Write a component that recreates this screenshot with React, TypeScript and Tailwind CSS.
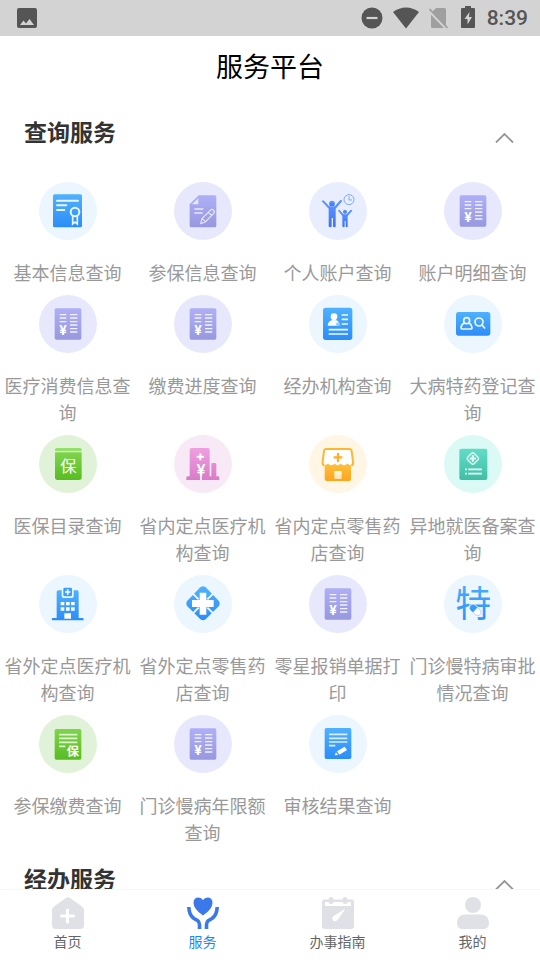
import { useState, type ReactNode } from "react";

type Service = { label: string; tint: string; art: ReactNode };

const Gradient = ({ id, from, to }: { id: string; from: string; to: string }) => (
  <linearGradient id={id} x1="0" y1="0" x2="0" y2="1">
    <stop offset="0" stopColor={from} />
    <stop offset="1" stopColor={to} />
  </linearGradient>
);

const Gradients = () => (
  <svg className="block size-0" aria-hidden="true">
    <defs>
      <Gradient id="blue" from="#4fb1fe" to="#2c8df7" />
      <Gradient id="indigo" from="#6297ff" to="#3b74f6" />
      <Gradient id="violet" from="#aeaff6" to="#9798de" />
      <Gradient id="green" from="#7fd44b" to="#58bd20" />
      <Gradient id="pink" from="#ef9fe0" to="#d87cc8" />
      <Gradient id="orange" from="#ffc03c" to="#fda41d" />
      <Gradient id="teal" from="#62dcc6" to="#40bea6" />
      <Gradient id="cream" from="#fffaf0" to="#ffe0a8" />
    </defs>
  </svg>
);

const Certificate = (
  <>
    <rect x="42" y="37" width="87" height="99" rx="5" fill="url(#blue)" />
    <g fill="none" stroke="#e9f5ff" strokeWidth="6" strokeLinecap="round">
      <path d="M54 56H117M54 70H82M54 84H76" />
      <circle cx="108" cy="90" r="13" />
      <path d="M101 104v22l7-6 7 6v-22" strokeWidth="5" />
    </g>
  </>
);

const EditDoc = (
  <>
    <path d="M74 40H122a5 5 0 0 1 5 5V131a5 5 0 0 1-5 5H52a5 5 0 0 1-5-5V67Z" fill="url(#violet)" />
    <path d="M54 67 73 49V67Z" fill="#e8e8fd" />
    <g fill="none" stroke="#e8e8fd" strokeWidth="4" strokeLinejoin="round">
      <path d="M61 81H88M61 93H86" />
      <path d="M80 125 84 110 109 85a6 6 0 0 1 10 9L95 119ZM84 110l11 9M103 91l10 9" strokeWidth="3.5" />
    </g>
  </>
);

const Family = (
  <>
    <g fill="url(#indigo)">
      <circle cx="69" cy="65" r="8.5" />
      <path d="M38 58q3-5 7-2L60 72q9 5 18 0L93 55q5-2 7 2L80 80V133q0 3-4 3t-4-3V108h-4v25q0 3-4 3t-5-3V80Z" />
      <circle cx="108" cy="89" r="6" />
      <path d="M87 86q1-4 5-2l10 11q6 3 12 0l10-11q4-2 6 2L116 102V133q0 3-3 3t-3-3V117h-3v16q0 3-3 3t-4-3V102Z" />
    </g>
    <g fill="none" stroke="#7ea8fb" strokeWidth="3">
      <circle cx="120" cy="53" r="15" />
      <path d="M120 43V54H129" />
    </g>
  </>
);

const Bill = (
  <>
    <rect x="47" y="40" width="80" height="94" rx="5" fill="url(#violet)" />
    <path
      d="M62 59H82M62 69H82M62 80H82M93 59H115M93 69H115M93 80H115M93 90H115M93 101H115M93 111H115"
      stroke="#f1f1ff"
      strokeWidth="4"
    />
    <text x="72" y="121" textAnchor="middle" fontSize="40" className="font-['Inter',sans-serif] font-bold" fill="#fff">
      ¥
    </text>
  </>
);

const Agency = (
  <>
    <rect x="42" y="38" width="88" height="97" rx="8" fill="url(#blue)" />
    <circle cx="75" cy="65" r="10" fill="#fff" />
    <path d="M56 92q1-17 19-17t16 17Z" fill="#fff" />
    <circle cx="87" cy="88" r="6" fill="#8ecbfb" />
    <path d="M98 60H117M98 73H117M98 87H117M59 104H117M59 117H117" stroke="#f1f9ff" strokeWidth="5" />
  </>
);

const PersonSearch = (
  <>
    <rect x="36" y="51" width="103" height="71" rx="8" fill="url(#blue)" />
    <g fill="none" stroke="#eef8ff" strokeWidth="5" strokeLinecap="round">
      <circle cx="68" cy="77" r="9" />
      <path d="M61 84q-9 4-10 14 0 4 5 4H79q6 0 5-5-1-9-9-13" />
      <circle cx="105" cy="81" r="12" />
      <path d="M114 90l8 9" />
    </g>
  </>
);

const Catalogue = (
  <>
    <path d="M48 48V45q0-6 6-6H122q6 0 6 6V48Z" fill="#90e069" />
    <path d="M48 52H128V127q0 8-8 8H56q-8 0-8-8Z" fill="url(#green)" />
    <text x="88" y="112" textAnchor="middle" fontSize="49" className="font-['Noto_Sans_CJK_SC',sans-serif] font-normal" fill="#fff">
      保
    </text>
  </>
);

const PinkHospital = (
  <>
    <path
      d="M47 124V45q0-6 6-6H101q6 0 6 6V124H112V87q0-3 3-3h9q3 0 3 3V124h5q4 0 4 4v7H37v-7q0-4 4-4Z"
      fill="url(#pink)"
    />
    <path d="M79 55V76M68 65H90" stroke="#fff" strokeWidth="6" />
    <text x="81" y="124" textAnchor="middle" fontSize="48" className="font-['Inter',sans-serif] font-semibold" fill="#fff">
      ¥
    </text>
    <path d="M81 120V135" stroke="#fff" strokeWidth="5" />
  </>
);

const Shop = (
  <>
    <path d="M47 86H126V132q0 6-6 6H53q-6 0-6-6Z" fill="url(#orange)" />
    <path
      d="M50 44H122q5 0 6 5l4 31q1 9-7 11-6 0-9-6-5 6-11 6t-10-6q-4 6-9 6t-9-6q-4 6-10 6t-11-6q-3 6-9 6-8-2-7-11l4-31q1-5 6-5Z"
      fill="#fff"
    />
    <path
      d="M46 92Q39 88 41 80L45 49Q46 42 52 42H121Q127 42 128 49L132 80Q134 88 127 92"
      fill="none"
      stroke="#ffb730"
      strokeWidth="6"
    />
    <path d="M87 54V81M74 67H100" stroke="#feae28" strokeWidth="7" />
    <rect x="76" y="108" width="22" height="24" rx="2" fill="url(#cream)" />
  </>
);

const RecordCard = (
  <>
    <rect x="46" y="41" width="84" height="94" rx="6" fill="url(#teal)" />
    <g fill="none" stroke="#e9fffa" strokeWidth="4">
      <rect x="73" y="57" width="27" height="27" rx="5" transform="rotate(45 86.5 70.5)" />
      <path d="M86.5 61V80M77 70.5H96" strokeWidth="6" />
      <path d="M63 103H69M73 103H114M63 116H69M73 116H114" strokeWidth="5" />
    </g>
  </>
);

const BlueHospital = (
  <>
    <path d="M53 129V51q0-5 5-5H114q5 0 5 5V129H131q3 0 3 4t-3 3H41q-3 0-3-3t3-4Z" fill="url(#blue)" />
    <rect x="68" y="33" width="36" height="36" rx="6" fill="#ecf6ff" />
    <rect x="73" y="38" width="26" height="26" rx="4" fill="#3a9ffa" />
    <path d="M86 43V59M78 51H94" stroke="#fff" strokeWidth="5" />
    <path
      d="M65 81h11v10h-11ZM81 81h11v10h-11ZM96 81h11v10h-11ZM65 97h11v10h-11ZM81 97h11v10h-11ZM96 97h11v10h-11ZM76 115h20v16h-20Z"
      fill="#fff"
    />
  </>
);

const Clover = (
  <>
    <path
      d="M79 37Q87 31 95 37L134 77Q140 85 134 94L95 133Q87 139 79 133L40 94Q34 85 40 77Z"
      fill="url(#blue)"
    />
    <path d="M56 55 74 73M118 55 100 73M56 116 74 98M118 116 100 98" stroke="#ecf6ff" strokeWidth="6" />
    <path d="M77 53H97V75H119V96H97V119H77V96H54V75H77Z" fill="#fff" />
  </>
);

const Special = (
  <>
    <text x="88" y="126" textAnchor="middle" fontSize="108" className="font-['Noto_Sans_CJK_SC',sans-serif] font-normal" fill="url(#blue)">
      特
    </text>
    <g transform="rotate(43 94 105)">
      <rect x="73" y="93" width="44" height="24" rx="12" fill="#ecf6ff" />
      <path d="M94 95V115H85a10 10 0 0 1 0-20Z" fill="#3a9cf9" />
      <path d="M94 95H104a10 10 0 0 1 0 20H94" fill="#fff" stroke="#8cc8fb" strokeWidth="2" />
    </g>
  </>
);

const InsuredPayment = (
  <>
    <rect x="47" y="42" width="80" height="92" rx="5" fill="url(#green)" />
    <path d="M60 59H115M60 70H115M60 82H115M60 94H79" stroke="#dff5d2" strokeWidth="5" />
    <text x="102" y="122" textAnchor="middle" fontSize="37" className="font-['Noto_Sans_CJK_SC',sans-serif] font-bold" fill="#fff">
      保
    </text>
  </>
);

const ReviewResult = (
  <>
    <rect x="47" y="39" width="80" height="93" rx="5" fill="url(#blue)" />
    <path d="M60 58H115M60 70H115M60 81H115M60 92H79" stroke="#d8eeff" strokeWidth="5" />
    <path d="M84 109 107 95l7 10-23 14ZM81 112l6 8-10 1Z" fill="#fff" />
  </>
);

const services: Service[] = [
  { label: "基本信息查询", tint: "#ebf6ff", art: Certificate },
  { label: "参保信息查询", tint: "#e8e8fd", art: EditDoc },
  { label: "个人账户查询", tint: "#e8eefe", art: Family },
  { label: "账户明细查询", tint: "#e8e8fd", art: Bill },
  { label: "医疗消费信息查询", tint: "#e8e8fd", art: Bill },
  { label: "缴费进度查询", tint: "#e8e8fd", art: Bill },
  { label: "经办机构查询", tint: "#ebf6ff", art: Agency },
  { label: "大病特药登记查询", tint: "#ebf6ff", art: PersonSearch },
  { label: "医保目录查询", tint: "#e0f3d9", art: Catalogue },
  { label: "省内定点医疗机构查询", tint: "#f8e9f7", art: PinkHospital },
  { label: "省内定点零售药店查询", tint: "#fff6e5", art: Shop },
  { label: "异地就医备案查询", tint: "#dcfaf5", art: RecordCard },
  { label: "省外定点医疗机构查询", tint: "#ebf6ff", art: BlueHospital },
  { label: "省外定点零售药店查询", tint: "#ebf6ff", art: Clover },
  { label: "零星报销单据打印", tint: "#e8e8fd", art: Bill },
  { label: "门诊慢特病审批情况查询", tint: "#ebf6ff", art: Special },
  { label: "参保缴费查询", tint: "#e0f3d9", art: InsuredPayment },
  { label: "门诊慢病年限额查询", tint: "#e8e8fd", art: Bill },
  { label: "审核结果查询", tint: "#ebf6ff", art: ReviewResult },
];

function StatusBar() {
  return (
    <div className="flex h-9 shrink-0 items-center justify-between bg-[#d3d3d3] pr-3 pl-4 text-[#555]">
      <svg className="h-5 w-[22px]" viewBox="0 0 22 20" fill="currentColor" aria-hidden="true">
        <path fillRule="evenodd" d="M3 0H19a2 2 0 0 1 2 2V18a2 2 0 0 1-2 2H3a2 2 0 0 1-2-2V2A2 2 0 0 1 3 0ZM4 17H18L13.500 11 10 15.500 7.500 12.500Z" />
      </svg>
      <div className="flex items-center gap-2.5">
        <svg className="size-[22px]" viewBox="0 0 22 22" aria-hidden="true">
          <circle cx="11" cy="11" r="10.500" fill="currentColor" />
          <path d="M5.500 11H16.500" stroke="#d3d3d3" strokeWidth="2.200" />
        </svg>
        <svg className="h-[22px] w-[26px]" viewBox="0 0 26 22" fill="currentColor" aria-hidden="true">
          <path d="M13 21.500 0 5Q6 .5 13 .5T26 5Z" />
        </svg>
        <svg className="h-[22px] w-5" viewBox="0 0 20 22" aria-hidden="true">
          <path d="M7 1H15.500Q17 1 17 2.500V19.500Q17 21 15.500 21H3.500Q2 21 2 19.500V6Z" fill="#9f9f9f" />
          <path d="M0 3.500 17.500 21.500" stroke="#d3d3d3" strokeWidth="3" />
          <path d="M.5 2 18.500 21" stroke="#9f9f9f" strokeWidth="1.800" />
        </svg>
        <svg className="h-6 w-[18px]" viewBox="0 0 18 24" aria-hidden="true">
          <path d="M6 0H12V2H15Q16 2 16 3V21Q16 22 15 22H3Q2 22 2 21V3Q2 2 3 2H6Z" fill="currentColor" />
          <path d="M10.500 6 5.500 13H8.500V18.500L13 11H10Z" fill="#d3d3d3" />
        </svg>
        <span className="font-['Roboto',sans-serif] text-[21px] leading-9 font-medium">8:39</span>
      </div>
    </div>
  );
}

function Section({ title, children }: { title: string; children?: ReactNode }) {
  const [open, setOpen] = useState(true);
  return (
    <section>
      <h2>
        <button
          type="button"
          aria-expanded={open}
          onClick={() => setOpen(!open)}
          className="flex h-12 w-full items-center justify-between px-6 pb-0.5 text-[23px] leading-[46px] font-bold text-[#333]"
        >
          {title}
          <svg className="mt-3.5 h-2.5 w-6" viewBox="0 0 24 10" fill="none" stroke="#969696" strokeWidth="1.800" aria-hidden="true">
            <path d={open ? "M4 9.500 12.500 1 21 9.500" : "M4 .5 12.500 9 21 .5"} />
          </svg>
        </button>
      </h2>
      {open && children}
    </section>
  );
}

const tabs = [
  {
    label: "首页",
    icon: (
      <>
        <path d="M14 1Q16-.5 18 1L30 9.500Q32 11 32 13V28Q32 32 28 32H4Q0 32 0 28V13Q0 11 2 9.500Z" fill="#dfe1e6" />
        <path d="M15.500 13V25M9.500 19H21.500" stroke="#fff" strokeWidth="3" strokeLinecap="round" />
      </>
    ),
  },
  {
    label: "服务",
    icon: (
      <>
        <path d="M16 18.500Q6.500 12 6.500 6 6.500 .5 11.500 .5 14.500 .5 16 3 17.500 .5 20.500 .5 25.500 .5 25.500 6 25.500 12 16 18.500Z" fill="#3b78ea" />
        <path d="M1.800 10Q2 18 7 21.500L10.500 23.500Q12.500 25 12.500 27.500V32M30.200 10Q30 18 25 21.500L21.500 23.500Q19.500 25 19.500 27.500V32" fill="none" stroke="#3b78ea" strokeWidth="3.600" />
      </>
    ),
  },
  {
    label: "办事指南",
    icon: (
      <>
        <path d="M2 2.500H30Q32 2.500 32 4.500V29Q32 32 29 32H3Q0 32 0 29V4.500Q0 2.500 2 2.500Z" fill="#dfe1e6" />
        <path d="M3 5H29V9H3Z" fill="#fff" />
        <rect x="6.500" y="0" width="5" height="7" rx="2.500" fill="#dfe1e6" />
        <rect x="20.500" y="0" width="5" height="7" rx="2.500" fill="#dfe1e6" />
        <path d="M23.500 11.500 16 22.500Q14 25 11.500 24 9.500 22 11 19.500Z" fill="#fff" />
      </>
    ),
  },
  {
    label: "我的",
    icon: (
      <g fill="#dfe1e6">
        <circle cx="16" cy="8" r="8" />
        <path d="M8 17.500H24Q32 18 32 26 32 32 26 32H6Q0 32 0 26 0 18 8 17.500Z" />
      </g>
    ),
  },
];

export default function App() {
  const [active, setActive] = useState(1);
  return (
    <div className="flex h-screen flex-col bg-white font-['Noto_Sans_CJK_SC',sans-serif]">
      <Gradients />
      <StatusBar />
      <header className="shrink-0 pb-0.5">
        <h1 className="text-center text-[27px] leading-[60px] text-black">服务平台</h1>
      </header>
      <main className="min-h-0 flex-1 overflow-y-auto pt-2.5 [scrollbar-width:none]">
        <Section title="查询服务">
          <div className="grid grid-cols-4 pt-[26px]">
            {services.map(({ label, tint, art }) => (
              <a key={label} href="#" className="flex flex-col items-center pb-[9px] text-center">
                <svg className="size-[58px]" viewBox="0 0 174 174" aria-hidden="true">
                  <circle cx="87" cy="87" r="87" fill={tint} />
                  {art}
                </svg>
                <span className="mt-[19px] text-lg leading-[27px] text-[#999]">{label}</span>
              </a>
            ))}
          </div>
        </Section>
        <Section title="经办服务" />
      </main>
      <nav className="grid shrink-0 grid-cols-4 border-t border-[#f7f7f7] bg-white">
        {tabs.map(({ label, icon }, i) => (
          <button
            key={label}
            type="button"
            onClick={() => setActive(i)}
            aria-current={i === active ? "page" : undefined}
            className="flex flex-col items-center pt-[7px] pb-2"
          >
            <svg className="size-8" viewBox="0 0 32 32" aria-hidden="true">
              {icon}
            </svg>
            <span className={`mt-0.5 text-sm leading-[21px] ${i === active ? "text-[#1989fa]" : "text-[#646566]"}`}>{label}</span>
          </button>
        ))}
      </nav>
    </div>
  );
}
